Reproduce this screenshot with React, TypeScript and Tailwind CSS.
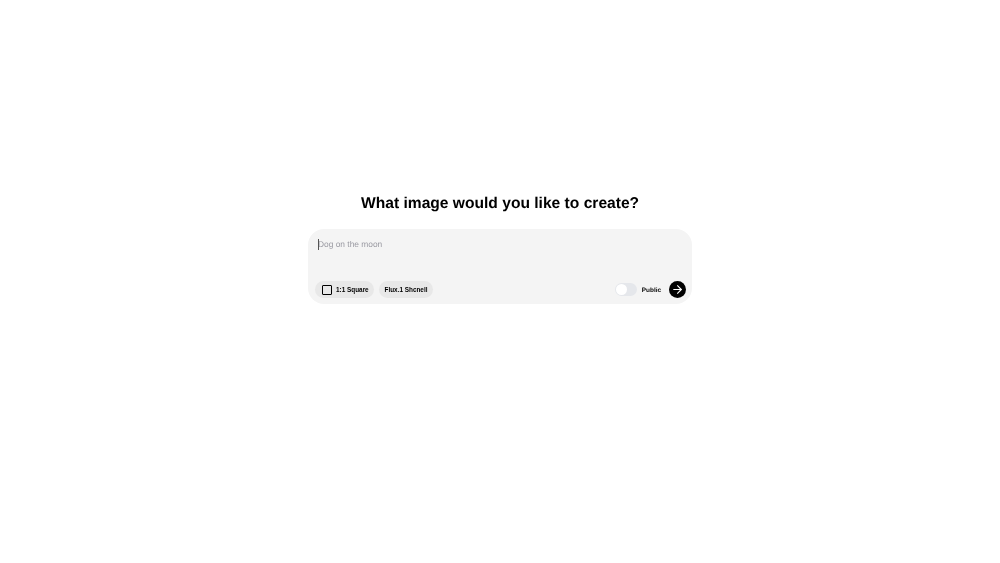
import React from "react";
import { ArrowRight } from "lucide-react";

const App: React.FC = () => {
  return (
    <div className="w-full h-[563px] bg-white flex flex-col items-center font-['Liberation_Sans',Arial,sans-serif] [text-rendering:geometricPrecision]">
      {/* heading */}
      <h1 className="mt-[193px] h-[22px] leading-[22px] text-[15.6px] font-bold text-black will-change-transform">
        What image would you like to create?
      </h1>
      {/* prompt box */}
      <div className="mt-[14px] w-[384px] h-[75px] bg-[#f4f4f4] rounded-[16px] flex flex-col will-change-transform">
        <div className="pl-[10px] pt-[10px] h-[52px] flex items-start">
          <div className="relative text-[8.4px] leading-[11px] text-[#9a9aa2]">
            <span className="absolute left-0 top-0 w-px h-[11px] bg-[#555]" />
            Dog on the moon
          </div>
        </div>
        <div className="flex items-center justify-between pl-[7px] pr-[6px]">
          <div className="flex items-center gap-[5px]">
            <button className="h-[17px] w-[59px] rounded-full bg-[#e8e8e8] flex items-center pl-[7px] gap-[4px]">
              <span className="w-[10px] h-[10px] border border-black rounded-[1px]" />
              <span className="text-[6.4px] leading-[17px] font-bold text-black">1:1 Square</span>
            </button>
            <button className="h-[17px] w-[54px] rounded-full bg-[#e8e8e8] flex items-center justify-center">
              <span className="text-[6.4px] leading-[17px] font-bold text-black">Flux.1 Shcnell</span>
            </button>
          </div>
          <div className="flex items-center">
            <div className="w-[22px] h-[13px] rounded-full bg-[#e5e7eb] flex items-center pl-px">
              <span className="w-[11px] h-[11px] rounded-full bg-white" />
            </div>
            <span className="ml-[5px] mt-[2px] text-[6.4px] font-bold text-black">Public</span>
            <button className="ml-[8px] w-[17px] h-[17px] rounded-full bg-black flex items-center justify-center">
              <ArrowRight size={13} color="white" strokeWidth={2} />
            </button>
          </div>
        </div>
      </div>
    </div>
  );
};

export default App;
